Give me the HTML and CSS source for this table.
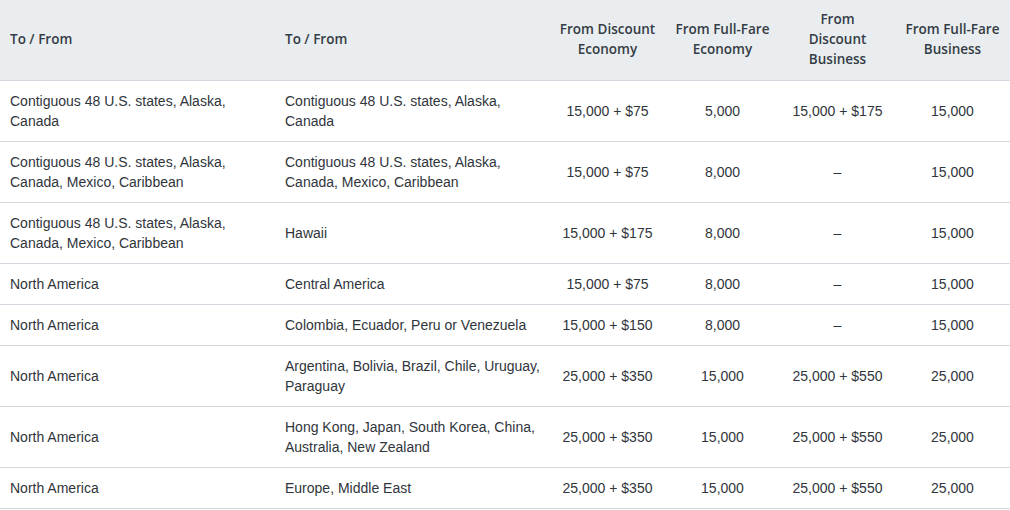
FILE: index.html
```html
<!DOCTYPE html>
<html>
<head>
<meta charset="utf-8">
<link rel="stylesheet" href="styles.css">
</head>
<body>
<table class="awards">
  <colgroup>
    <col class="c-wide"><col class="c-wide">
    <col class="c-num"><col class="c-num"><col class="c-num"><col class="c-num">
  </colgroup>
  <thead>
    <tr>
      <th class="left">To / From</th>
      <th class="left">To / From</th>
      <th>From Discount Economy</th>
      <th>From Full-Fare Economy</th>
      <th class="narrow">From Discount Business</th>
      <th>From Full-Fare Business</th>
    </tr>
  </thead>
  <tbody>
    <tr><td class="left">Contiguous 48 U.S. states, Alaska, Canada</td><td class="left">Contiguous 48 U.S. states, Alaska, Canada</td><td>15,000 + $75</td><td>5,000</td><td>15,000 + $175</td><td>15,000</td></tr>
    <tr><td class="left">Contiguous 48 U.S. states, Alaska, Canada, Mexico, Caribbean</td><td class="left">Contiguous 48 U.S. states, Alaska, Canada, Mexico, Caribbean</td><td>15,000 + $75</td><td>8,000</td><td>–</td><td>15,000</td></tr>
    <tr><td class="left">Contiguous 48 U.S. states, Alaska, Canada, Mexico, Caribbean</td><td class="left">Hawaii</td><td>15,000 + $175</td><td>8,000</td><td>–</td><td>15,000</td></tr>
    <tr><td class="left">North America</td><td class="left">Central America</td><td>15,000 + $75</td><td>8,000</td><td>–</td><td>15,000</td></tr>
    <tr><td class="left">North America</td><td class="left">Colombia, Ecuador, Peru or Venezuela</td><td>15,000 + $150</td><td>8,000</td><td>–</td><td>15,000</td></tr>
    <tr><td class="left">North America</td><td class="left">Argentina, Bolivia, Brazil, Chile, Uruguay, Paraguay</td><td>25,000 + $350</td><td>15,000</td><td>25,000 + $550</td><td>25,000</td></tr>
    <tr><td class="left">North America</td><td class="left">Hong Kong, Japan, South Korea, China, Australia, New Zealand</td><td>25,000 + $350</td><td>15,000</td><td>25,000 + $550</td><td>25,000</td></tr>
    <tr><td class="left">North America</td><td class="left">Europe, Middle East</td><td>25,000 + $350</td><td>15,000</td><td>25,000 + $550</td><td>25,000</td></tr>
  </tbody>
</table>
</body>
</html>
```
FILE: styles.css
```css
html, body {
  margin: 0;
  padding: 0;
  background: #ffffff;
}
.awards {
  width: 1010px;
  table-layout: fixed;
  border-collapse: collapse;
  font-family: "Liberation Sans", Arial, sans-serif;
  font-size: 14px;
  line-height: 20px;
  color: #30353b;
}
.c-wide { width: 275px; }
.c-num { width: 115px; }
.awards th {
  background: #eaedef;
  font-family: "Open Sans", "Liberation Sans", sans-serif;
  font-weight: 600;
  font-size: 13.5px;
  color: #343c45;
  text-align: center;
  vertical-align: middle;
  padding: 9px 8px 11px;
  border-bottom: 1px solid #d3d9df;
}
.awards th.narrow {
  padding-left: 14px;
  padding-right: 14px;
}
.awards td {
  text-align: center;
  vertical-align: middle;
  padding: 10px 8px;
  border-bottom: 1px solid #d3d9df;
}
.awards .left {
  text-align: left;
  padding-left: 10px;
  padding-right: 8px;
}
```
